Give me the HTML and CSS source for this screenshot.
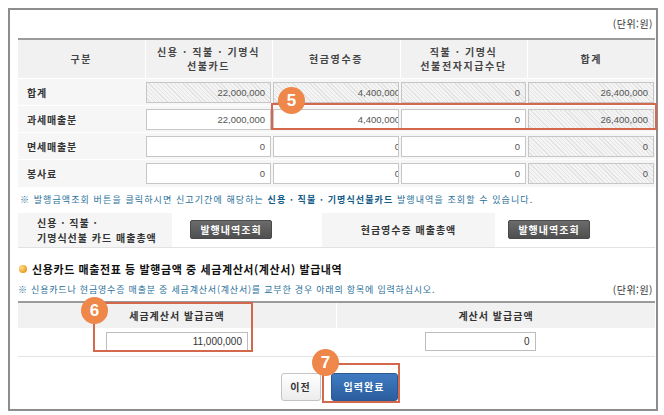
FILE: index.html
```html
<!DOCTYPE html>
<html lang="ko">
<head>
  <meta charset="UTF-8">
  <meta name="viewport" content="width=device-width, initial-scale=1.0">
  <title>신용카드 매출전표 등 발행금액 집계표</title>
  <link rel="stylesheet" href="styles.css">
</head>
<body>
  <div class="frame">
    <div class="unit">(단위:원)</div>

    <!-- 매출 집계 -->
    <table class="sales">
      <colgroup>
        <col style="width:127px"><col style="width:127px"><col style="width:128px"><col style="width:127px"><col style="width:128px">
      </colgroup>
      <thead>
        <tr>
          <th>구분</th>
          <th>신용 · 직불 · 기명식<br>선불카드</th>
          <th>현금영수증</th>
          <th>직불 · 기명식<br>선불전자지급수단</th>
          <th>합계</th>
        </tr>
      </thead>
      <tbody>
        <tr>
          <th>합계</th>
          <td><div class="field ro">22,000,000</div></td>
          <td><div class="field ro clip"><span>4,400,000</span></div></td>
          <td><div class="field ro">0</div></td>
          <td><div class="field ro">26,400,000</div></td>
        </tr>
        <tr>
          <th>과세매출분</th>
          <td><div class="field">22,000,000</div></td>
          <td><div class="field clip"><span>4,400,000</span></div></td>
          <td><div class="field">0</div></td>
          <td><div class="field ro">26,400,000</div></td>
        </tr>
        <tr>
          <th>면세매출분</th>
          <td><div class="field">0</div></td>
          <td><div class="field clip"><span>0</span></div></td>
          <td><div class="field">0</div></td>
          <td><div class="field ro">0</div></td>
        </tr>
        <tr>
          <th>봉사료</th>
          <td><div class="field">0</div></td>
          <td><div class="field clip"><span>0</span></div></td>
          <td><div class="field">0</div></td>
          <td><div class="field ro">0</div></td>
        </tr>
      </tbody>
    </table>

    <p class="notice first">※ 발행금액조회 버튼을 클릭하시면 신고기간에 해당하는 <b>신용 · 직불 · 기명식선불카드</b> 발행내역을 조회할 수 있습니다.</p>

    <table class="lookup">
      <tr>
        <th class="l1">신용 · 직불 ·<br>기명식선불 카드 매출총액</th>
        <td class="b1"><button class="btn-dark">발행내역조회</button></td>
        <th class="l2">현금영수증 매출총액</th>
        <td class="b2"><button class="btn-dark">발행내역조회</button></td>
      </tr>
    </table>

    <h3 class="sub"><span class="dot"></span>신용카드 매출전표 등 발행금액 중 세금계산서(계산서) 발급내역</h3>

    <div class="note-row">
      <p class="notice">※ 신용카드나 현금영수증 매출분 중 세금계산서(계산서)를 교부한 경우 아래의 항목에 입력하십시오.</p>
      <span class="unit-inline">(단위:원)</span>
    </div>

    <table class="invoice">
      <thead>
        <tr><th>세금계산서 발급금액</th><th>계산서 발급금액</th></tr>
      </thead>
      <tbody>
        <tr>
          <td><div class="field big w1">11,000,000</div></td>
          <td><div class="field big w2">0</div></td>
        </tr>
      </tbody>
    </table>

    <div class="actions">
      <button class="btn">이전</button>
      <button class="btn primary">입력완료</button>
    </div>

    <!-- guide marks -->
    <div class="mark m5"></div>
    <div class="mark m6"></div>
    <div class="mark m7"></div>
    <span class="badge b5">5</span>
    <span class="badge b6">6</span>
    <span class="badge b7">7</span>
  </div>
</body>
</html>
```

FILE: styles.css
```css
body {
    margin: 0;
    background: #fff;
    font-family: "Noto Sans CJK KR", "Liberation Sans", sans-serif;
    color: #333;
}

.frame {
    position: relative;
    box-sizing: border-box;
    width: 650px;
    height: 403px;
    margin: 8px 0 0 8px;
    border: 2px solid #8d8d8d;
    padding: 0 0 0 8px;
}

.unit {
    height: 28px;
    line-height: 28px;
    text-align: right;
    font-size: 10px;
    padding-right: 3px;
    color: #333;
    letter-spacing: 0.5px;
}

/* main table */
.sales {
    width: 637px;
    table-layout: fixed;
    border-collapse: collapse;
    border-top: 2px solid #9b9b9b;
}

.sales thead th {
    height: 38px;
    padding: 0;
    background: #f1f1f1;
    border-left: 1px solid #fff;
    font-size: 10px;
    line-height: 14px;
    font-weight: bold;
    color: #444;
    letter-spacing: 1.6px;
}
.sales thead th:first-child { border-left: 0; }

.sales tbody tr {
    height: 27px;
    background: #f6f6f6;
    border-top: 1px solid #fff;
}

.sales tbody th {
    text-align: left;
    padding: 0 0 0 9px;
    font-size: 10px;
    font-weight: bold;
    color: #333;
    letter-spacing: 0.8px;
}

.sales td {
    padding: 0 1px;
}

.field {
    box-sizing: border-box;
    height: 21px;
    line-height: 19px;
    border: 1px solid #c6c6c6;
    background: #fff;
    text-align: right;
    padding-right: 5px;
    font-family: "Liberation Sans", sans-serif;
    font-size: 9.5px;
    color: #555;
    overflow: hidden;
    white-space: nowrap;
}

.field.ro {
    background: repeating-linear-gradient(45deg, #f4f4f4 0 2px, #e3e3e3 2px 3px);
}

.field.clip { padding-right: 0; }
.field.clip span { margin-right: -2px; }

/* notices */
.notice {
    margin: 0;
    font-size: 9px;
    color: #2a7099;
    letter-spacing: 0.8px;
}
.notice.first {
    height: 26px;
    line-height: 26px;
    padding-left: 2px;
    letter-spacing: 1.1px;
}
.notice b { color: #135b88; }

/* lookup row */
.lookup {
    width: 637px;
    border-collapse: collapse;
    table-layout: fixed;
}
.lookup tr {
    height: 35px;
    border-bottom: 1px solid #e2e2e2;
}
.lookup th {
    background: #f5f5f5;
    font-size: 10px;
    font-weight: bold;
    color: #333;
    letter-spacing: 1px;
    line-height: 15px;
    padding: 0;
}
.lookup .l1 { width: 135px; text-align: left; padding-left: 19px; }
.lookup .b1 { width: 132px; padding: 0 0 0 18px; }
.lookup .l2 { width: 173px; }
.lookup .b2 { padding: 0 0 0 13px; }

.btn-dark {
    display: block;
    width: 82px;
    height: 19px;
    padding: 0;
    border: 1px solid #4a4a4a;
    border-radius: 2px;
    background: linear-gradient(#6b6b6b, #4f4f4f);
    color: #fff;
    font-family: inherit;
    font-size: 10px;
    font-weight: bold;
    letter-spacing: 1px;
}

/* sub heading */
.sub {
    margin: 12px 0 0;
    line-height: 18px;
    font-size: 11px;
    font-weight: bold;
    color: #111;
    letter-spacing: 0.6px;
    display: flex;
    align-items: center;
    gap: 5px;
}
.dot {
    width: 8px;
    height: 8px;
    border-radius: 50%;
    margin-left: 1px;
    background: radial-gradient(circle at 35% 35%, #fde08a, #f0a92e 55%, #d98316);
}

.note-row {
    display: flex;
    justify-content: space-between;
    align-items: center;
    height: 23px;
}
.unit-inline {
    font-size: 10px;
    padding-right: 3px;
    letter-spacing: 0.5px;
    color: #333;
}

/* invoice table */
.invoice {
    width: 637px;
    table-layout: fixed;
    border-collapse: collapse;
    border-top: 2px solid #9b9b9b;
}
.invoice th {
    height: 25px;
    padding: 0;
    background: #f1f1f1;
    border-left: 1px solid #fff;
    font-size: 10px;
    font-weight: bold;
    color: #333;
    letter-spacing: 1px;
}
.invoice th:first-child { width: 318px; border-left: 0; }
.invoice tbody tr {
    height: 28px;
    border-bottom: 1px solid #e3e3e3;
}
.invoice td {
    padding: 0 0 0 88px;
}
.field.big {
    height: 19px;
    line-height: 17px;
    font-size: 10px;
    color: #333;
    border-color: #bdbdbd;
}
.field.w1 { width: 142px; }
.field.w2 { width: 111px; }

/* buttons */
.actions {
    display: flex;
    justify-content: center;
    gap: 10px;
    margin-top: 16px;
    padding-left: 4px;
}
.btn {
    height: 28px;
    width: 40px;
    padding: 0;
    border: 1px solid #c4c4c4;
    border-radius: 3px;
    background: linear-gradient(#ffffff, #ececec);
    font-family: inherit;
    font-size: 10px;
    font-weight: bold;
    color: #333;
    letter-spacing: 1px;
}
.btn.primary {
    width: 67px;
    border-color: #2a5994;
    background: linear-gradient(#3f7bc2, #2b5d9e);
    color: #fff;
}

/* guide overlays */
.mark {
    position: absolute;
    box-sizing: border-box;
    border: 2px solid #d4684c;
}
.m5 { left: 261px; top: 93px; width: 386px; height: 27px; }
.m6 { left: 83px; top: 292px; width: 160px; height: 50px; }
.m7 { left: 312px; top: 353px; width: 78px; height: 40px; }

.badge {
    position: absolute;
    width: 27px;
    height: 27px;
    border-radius: 50%;
    background: #ef874a;
    color: #fff;
    font-family: "Liberation Sans", sans-serif;
    font-size: 17px;
    font-weight: bold;
    line-height: 27px;
    text-align: center;
}
.b5 { left: 268px; top: 77px; }
.b6 { left: 71px; top: 287px; }
.b7 { left: 302px; top: 339px; }
```
